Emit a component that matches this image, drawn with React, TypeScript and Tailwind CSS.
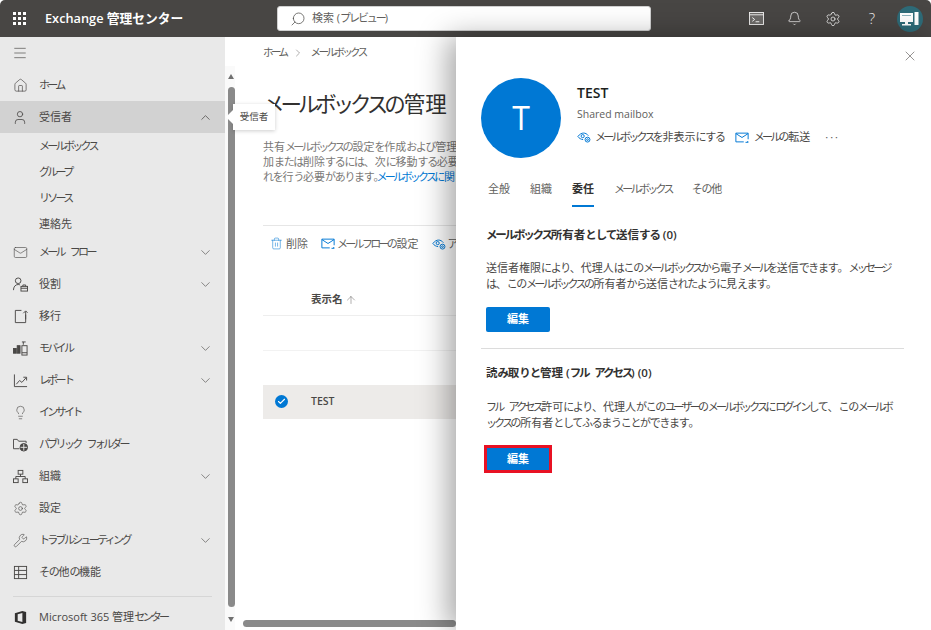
import {
  ArrowUp,
  Bell,
  Check,
  ChevronDown,
  ChevronRight,
  ChevronUp,
  Home,
  Lightbulb,
  Mail,
  Menu,
  Search,
  Settings,
  Trash2,
  User,
  Wrench,
  X,
} from 'lucide-react';
import type { ReactNode } from 'react';

const font = "font-['Open_Sans','Noto_Sans_CJK_JP',sans-serif]";

// the reference font sets kana much narrower than Noto does
function Jp({ children, soft }: { children: string; soft?: boolean }) {
  const runs = children.split(/([\u30A0-\u30FF]+|[\u3040-\u309F]+)/);
  return (
    <>
      {runs.map((run, i) => {
        if (/^[\u30A0-\u30FF]/.test(run)) {
          return (
            <span key={i} className={soft ? 'tracking-[-0.19em]' : 'tracking-[-0.245em]'}>
              {run}
            </span>
          );
        }
        if (/^[\u3040-\u309F]/.test(run)) {
          return (
            <span key={i} className={soft ? 'tracking-[-0.1em]' : 'tracking-[-0.12em]'}>
              {run}
            </span>
          );
        }
        if (run === ' ') {
          return (
            <span key={i} className="[word-spacing:3px]">
              {run}
            </span>
          );
        }
        return <span key={i}>{run}</span>;
      })}
    </>
  );
}

function EyeGear({ className = '' }: { className?: string }) {
  return (
    <svg viewBox="0 0 16 16" className={className} fill="none" stroke="currentColor" strokeWidth="1.1">
      <path d="M1 7.5C3 4.5 5.5 3.5 7.5 3.5s4 1 5.5 3" />
      <path d="M1 7.5c1.5 2 3.5 3.2 6 3.5" />
      <circle cx="6.5" cy="7" r="1.8" />
      <circle cx="12" cy="11" r="2.8" fill="white" />
      <circle cx="12" cy="11" r="1" />
    </svg>
  );
}

function MailArrow({ className = '' }: { className?: string }) {
  return (
    <svg viewBox="0 0 16 14" className={className} fill="none" stroke="currentColor" strokeWidth="1.1">
      <path d="M10 12H1V2h14v7" />
      <path d="M1 2.5l7 4.5 7-4.5" />
      <path d="M12 12.5h3M14 11l1.5 1.5" />
    </svg>
  );
}

function RoleIcon() {
  return (
    <svg viewBox="0 0 16 16" className="w-[15px] h-[15px]" fill="none" stroke="currentColor" strokeWidth="1">
      <circle cx="5.5" cy="4" r="3" />
      <path d="M0.5 14c0-3.5 2-6 5-6 1 0 1.5.2 2 .5" />
      <rect x="8.5" y="10" width="7" height="5" />
      <path d="M10.5 10V8.5h3V10M8.5 12h7" />
    </svg>
  );
}

function MigrationIcon() {
  return (
    <svg viewBox="0 0 16 16" className="w-[15px] h-[15px]" fill="none" stroke="currentColor" strokeWidth="1">
      <path d="M9 1.5H2.5v13h11V6" />
      <path d="M13.5 11V2.5M11 4.5l2.5-2.5 2 2" />
    </svg>
  );
}

function MobileIcon() {
  return (
    <svg viewBox="0 0 16 16" className="w-[15px] h-[15px]" fill="none" stroke="currentColor" strokeWidth="1">
      <rect x="0.5" y="8" width="3" height="5" fill="currentColor" />
      <rect x="4.5" y="5" width="3" height="8" fill="currentColor" />
      <path d="M9.5 1h4M11 1v3" />
      <rect x="9.5" y="5" width="5.5" height="10" />
      <path d="M9.5 12.5h5.5" />
    </svg>
  );
}

function ReportIcon() {
  return (
    <svg viewBox="0 0 16 16" className="w-[15px] h-[15px]" fill="none" stroke="currentColor" strokeWidth="1">
      <path d="M1.5 1.5v13H15" />
      <path d="M3.5 12L7 8l2.5 2L14 5M11 4.5h3.5V8" />
    </svg>
  );
}

function FolderGlobe() {
  return (
    <svg viewBox="0 0 16 16" className="w-[15px] h-[15px]" fill="none" stroke="currentColor" strokeWidth="1">
      <path d="M7 12.5H.5v-10h4l1.5 2h8v2" />
      <circle cx="11.5" cy="11" r="4" fill="currentColor" />
      <path d="M8 11h7M11.5 7.5v7" stroke="#e9e9e9" />
    </svg>
  );
}

function OrgIcon() {
  return (
    <svg viewBox="0 0 16 16" className="w-[15px] h-[15px]" fill="none" stroke="currentColor" strokeWidth="1">
      <rect x="5.5" y="1.5" width="5" height="4" />
      <rect x="0.5" y="10.5" width="5" height="4" />
      <rect x="10.5" y="10.5" width="5" height="4" />
      <path d="M8 5.5V8M3 10.5V8h10v2.5" />
    </svg>
  );
}

function TableIcon() {
  return (
    <svg viewBox="0 0 16 16" className="w-[15px] h-[15px]" fill="none" stroke="currentColor" strokeWidth="1">
      <rect x="1.5" y="1.5" width="13" height="13" />
      <path d="M1.5 5.8h13M1.5 10.2h13M6 1.5v13" />
    </svg>
  );
}

function OfficeIcon() {
  return (
    <svg viewBox="0 0 16 16" className="w-[15px] h-[15px]" fill="#323130">
      <path d="M10 1L2 3.5v9L10 15l4-1.2V2.2L10 1zM5 11.5v-7l5-1.2v9.400l-5-1.200z" />
    </svg>
  );
}

function TerminalIcon() {
  return (
    <svg viewBox="0 0 16 14" className="w-[15px] h-[13px] mr-[23px]" fill="none" stroke="currentColor">
      <rect x="0.5" y="0.5" width="15" height="13" fill="#6d6b69" />
      <path d="M0.5 3h15" />
      <path d="M3.5 6L6 8l-2.5 2M7 10.5h4" stroke="white" />
    </svg>
  );
}

function NavRow({
  icon,
  label,
  chevron,
  active,
}: {
  icon: ReactNode;
  label: string;
  chevron?: boolean;
  active?: boolean;
}) {
  return (
    <div className={`h-8 shrink-0 flex items-center pl-[12px] pr-[12px] text-[#4a4846] ${active ? 'bg-[#d2d2d2]' : ''}`}>
      <span className="w-[16px] h-4 flex items-center justify-center shrink-0">{icon}</span>
      <span className="ml-[11px] text-[11px] flex-1 whitespace-nowrap">
        <Jp>{label}</Jp>
      </span>
      {chevron && !active && <ChevronDown className="w-[15px] h-[15px]" strokeWidth={1} />}
      {active && <ChevronUp className="w-[15px] h-[15px]" strokeWidth={1.2} />}
    </div>
  );
}

function SubRow({ label }: { label: string }) {
  return (
    <div className="h-[26px] shrink-0 flex items-center pl-[39px] text-[11px] text-[#4a4846]">
      <span>
        <Jp>{label}</Jp>
      </span>
    </div>
  );
}

function PrimaryButton() {
  return (
    <div className="w-16 h-[25px] bg-[#0078d4] rounded-[2px] flex items-center justify-center text-white text-[11px] font-semibold">
      編集
    </div>
  );
}

const iconClass = 'w-[15px] h-[15px]';

export default function App() {
  return (
    <div className={`${font} w-[931px] h-[630px] flex flex-col overflow-hidden bg-white`}>
      <header className="h-[37px] shrink-0 bg-[#484644] rounded-t-[5px] flex items-center text-white">
        <div className="ml-[13px] grid grid-cols-3 gap-[2.5px] w-[13px]">
          {Array.from({ length: 9 }).map((_, i) => (
            <span key={i} className="w-[2.5px] h-[2.5px] bg-white" />
          ))}
        </div>
        <div className="ml-[19px] w-[232px] text-[12.75px] font-semibold">Exchange 管理センター</div>
        <div className="w-[374px] h-[25px] bg-white rounded-[3px] flex items-center pl-[12px] text-[11px] text-[#605e5c] border border-[#d0d0d0]">
          <Search className="w-4 h-4 -scale-x-100 mr-[6px] text-[#4a4846]" strokeWidth={1.1} />
          <span>
            <Jp soft>検索 (プレビュー)</Jp>
          </span>
        </div>
        <div className="flex-1 flex items-center justify-end pr-[8px] text-[#f3f2f1]">
          <TerminalIcon />
          <Bell className="w-[15px] h-[15px] mr-[23px]" strokeWidth={1.2} />
          <Settings className="w-4 h-4 mr-[28px]" strokeWidth={1.2} />
          <span className="text-[15px] font-light mr-[22px]">?</span>
          <div className="w-[26px] h-[26px] rounded-full bg-[#2e6b78] flex items-center justify-center">
            <svg viewBox="0 0 20 16" className="w-[20px] h-4" fill="white">
              <rect x="0" y="2" width="13" height="9" />
              <rect x="2" y="4" width="9" height="1" fill="#8fb4bd" />
              <rect x="5" y="11" width="3" height="2" />
              <rect x="2" y="13" width="9" height="1.5" />
              <rect x="14.5" y="1" width="4" height="13" />
            </svg>
          </div>
        </div>
      </header>

      <div className="flex-1 flex min-h-0">
        <aside className="w-[225px] shrink-0 bg-[#e9e9e9] flex flex-col overflow-hidden">
          <div className="h-8 shrink-0 flex items-center pl-[12px] text-[#4a4846]">
            <Menu className="w-4 h-4" strokeWidth={1} />
          </div>
          <NavRow icon={<Home className={iconClass} strokeWidth={1.1} />} label="ホーム" />
          <NavRow icon={<User className="w-[17px] h-[17px]" strokeWidth={1.2} />} label="受信者" active />
          <div className="shrink-0">
            <SubRow label="メールボックス" />
            <SubRow label="グループ" />
            <SubRow label="リソース" />
            <SubRow label="連絡先" />
          </div>
          <div className="-mt-[1px] shrink-0">
            <NavRow icon={<Mail className={iconClass} strokeWidth={1} />} label="メール フロー" chevron />
            <NavRow icon={<RoleIcon />} label="役割" chevron />
            <NavRow icon={<MigrationIcon />} label="移行" />
            <NavRow icon={<MobileIcon />} label="モバイル" chevron />
            <NavRow icon={<ReportIcon />} label="レポート" chevron />
            <NavRow icon={<Lightbulb className={iconClass} strokeWidth={1} />} label="インサイト" />
            <NavRow icon={<FolderGlobe />} label="パブリック フォルダー" />
            <NavRow icon={<OrgIcon />} label="組織" chevron />
            <NavRow icon={<Settings className={iconClass} strokeWidth={1} />} label="設定" />
            <NavRow icon={<Wrench className={iconClass} strokeWidth={1} />} label="トラブルシューティング" chevron />
            <NavRow icon={<TableIcon />} label="その他の機能" />
          </div>
          <div className="mx-[13px] mt-[8px] shrink-0 border-t border-[#d6d6d6]" />
          <div className="mt-[4px] shrink-0">
            <NavRow icon={<OfficeIcon />} label="Microsoft 365 管理センター" />
          </div>
        </aside>

        <main className="flex-1 flex min-w-0">
          <div className="w-[231px] shrink-0 relative overflow-hidden pl-[38px] text-[#4a4846]">
            <div className="pt-[8px] flex items-center text-[10.5px] text-[#605e5c] whitespace-nowrap">
              <span>
                <Jp>ホーム</Jp>
              </span>
              <ChevronRight className="w-3 h-3 mx-[6px]" strokeWidth={1} />
              <span>
                <Jp>メールボックス</Jp>
              </span>
            </div>
            <h1 className="mt-[27px] text-[21.5px] leading-[32px] text-[#323130] whitespace-nowrap">
              <Jp soft>メールボックスの管理</Jp>
            </h1>
            <div className="mt-[19px] text-[11px] leading-[15px] text-[#7a7876] whitespace-nowrap">
              <div>
                <Jp>共有メールボックスの設定を作成および管理</Jp>
              </div>
              <div>
                <Jp>加または削除するには、次に移動する必要</Jp>
              </div>
              <div>
                <Jp>れを行う必要があります。</Jp>
                <span className="-ml-[8px] text-[#0078d4]">
                  <Jp>メールボックスに関</Jp>
                </span>
              </div>
            </div>
            <div className="mt-[41px] border-t border-[#e6e6e6] h-[37px] flex items-center pl-[7px] text-[11px] text-[#605e5c] whitespace-nowrap">
              <Trash2 className="w-[13px] h-[15px] shrink-0 text-[#0078d4] mr-[3px]" strokeWidth={1} />
              <span>削除</span>
              <MailArrow className="w-[14px] h-[13px] shrink-0 text-[#0078d4] ml-[13px] mr-[2px]" />
              <span>
                <Jp>メールフローの設定</Jp>
              </span>
              <EyeGear className="w-[14px] h-[14px] shrink-0 text-[#0078d4] ml-[13px] mr-[2px]" />
              <span>ア</span>
            </div>
            <div className="mt-[17px] h-[37px] pt-[6px] border-b border-[#eeeeee] flex items-center pl-[48px] text-[10.5px] font-semibold text-[#4a4846]">
              表示名
              <ArrowUp className="w-3 h-3 ml-[2px] text-[#605e5c]" strokeWidth={1} />
            </div>
            <div className="h-[35px] border-b border-[#f2f2f2]" />
            <div className="mt-[34px] h-[34px] bg-[#edebe9] flex items-center pl-[12px] text-[10.5px] font-semibold">
              <span className="w-[13px] h-[13px] rounded-full bg-[#0078d4] flex items-center justify-center mr-[23px]">
                <Check className="w-[9px] h-[9px] text-white" strokeWidth={3} />
              </span>
              TEST
            </div>

            {/* scrollbars */}
            <div className="absolute left-0 top-[29px] bottom-0 w-[10px] bg-[#fafafa]" />
            <div className="absolute left-[3px] top-[50px] w-[7px] h-[520px] rounded-full bg-[#8a8a8a]" />
            <div className="absolute left-[3px] top-[37px] w-0 h-0 border-x-[3.5px] border-x-transparent border-b-[5px] border-b-[#707070]" />
            <div className="absolute left-[3px] top-[580px] w-0 h-0 border-x-[3.5px] border-x-transparent border-t-[5px] border-t-[#707070]" />
            <div className="absolute left-[18px] top-[583px] right-0 h-[7px] rounded-full bg-[#8a8a8a]" />

            {/* tooltip */}
            <div className="absolute left-[8px] top-[67px] w-[42px] h-[26px] bg-white shadow-[0_1px_4px_rgba(0,0,0,0.2)] flex items-center justify-center text-[9.5px] text-[#4a4846]">
              <span className="absolute -left-[7px] top-[6px] w-0 h-0 border-y-[7px] border-y-transparent border-r-[7px] border-r-white" />
              受信者
            </div>
          </div>

          {/* details panel */}
          <section className="flex-1 relative z-10 bg-white shadow-[-8px_0_28px_rgba(0,0,0,0.35)] pl-[25px] pr-[27px]">
            <X className="absolute right-[13px] top-[11px] w-4 h-4 text-[#605e5c]" strokeWidth={1} />
            <div className="pt-[41px] flex">
              <div className="w-20 h-20 rounded-full bg-[#0078d4] flex items-center justify-center text-white text-[32px] shrink-0">
                T
              </div>
              <div className="ml-4 pt-[5px]">
                <div className="text-[14px] leading-5 font-semibold text-[#201f1e]">TEST</div>
                <div className="mt-[3px] text-[10.5px] leading-4 text-[#605e5c]">Shared mailbox</div>
                <div className="mt-[7px] flex items-center text-[11px] leading-4 text-[#4a4846] whitespace-nowrap">
                  <EyeGear className="w-[14px] h-[14px] shrink-0 text-[#0078d4] mr-[4px]" />
                  <span>
                    <Jp>メールボックスを非表示にする</Jp>
                  </span>
                  <MailArrow className="w-[14px] h-[13px] shrink-0 text-[#0078d4] ml-[10px] mr-[5px]" />
                  <span>
                    <Jp>メールの転送</Jp>
                  </span>
                  <span className="ml-[15px] tracking-[2px] text-[#605e5c]">···</span>
                </div>
              </div>
            </div>
            <nav className="mt-[16px] ml-[7px] flex gap-[20px] text-[11px] text-[#605e5c] h-[33px]">
              <span className="pt-[7px]">全般</span>
              <span className="pt-[7px]">組織</span>
              <span className="pt-[7px] font-semibold text-[#323130] border-b-2 border-[#0078d4]">委任</span>
              <span className="pt-[7px]">
                <Jp>メールボックス</Jp>
              </span>
              <span className="pt-[7px]">
                <Jp>その他</Jp>
              </span>
            </nav>
            <div className="mt-[20px] pl-[5px]">
              <h2 className="text-[11.5px] leading-4 font-semibold text-[#323130]">
                <Jp soft>メールボックス所有者として送信する (0)</Jp>
              </h2>
              <p className="mt-[17px] text-[11px] leading-4 text-[#4a4846] whitespace-nowrap">
                <Jp>送信者権限により、代理人はこのメールボックスから電子メールを送信できます。メッセージ</Jp>
                <br />
                <Jp>は、このメールボックスの所有者から送信されたように見えます。</Jp>
              </p>
              <div className="mt-[15px]">
                <PrimaryButton />
              </div>
            </div>
            <div className="mt-[16px] border-t border-[#dcdcdc]" />
            <div className="mt-[16px] pl-[5px]">
              <h2 className="text-[11.5px] leading-4 font-semibold text-[#323130]">
                <Jp soft>読み取りと管理 (フル アクセス) (0)</Jp>
              </h2>
              <p className="mt-[18px] text-[11px] leading-4 text-[#4a4846] whitespace-nowrap">
                <Jp>フル アクセス許可により、代理人がこのユーザーのメールボックスにログインして、このメールボ</Jp>
                <br />
                <Jp>ックスの所有者としてふるまうことができます。</Jp>
              </p>
              <div className="mt-[14px] -ml-[2px] w-[68px] h-[28px] border-[3px] border-[#e81123] bg-[#0078d4] flex items-center justify-center text-white text-[11px] font-semibold">
                編集
              </div>
            </div>
          </section>
        </main>
      </div>
    </div>
  );
}
